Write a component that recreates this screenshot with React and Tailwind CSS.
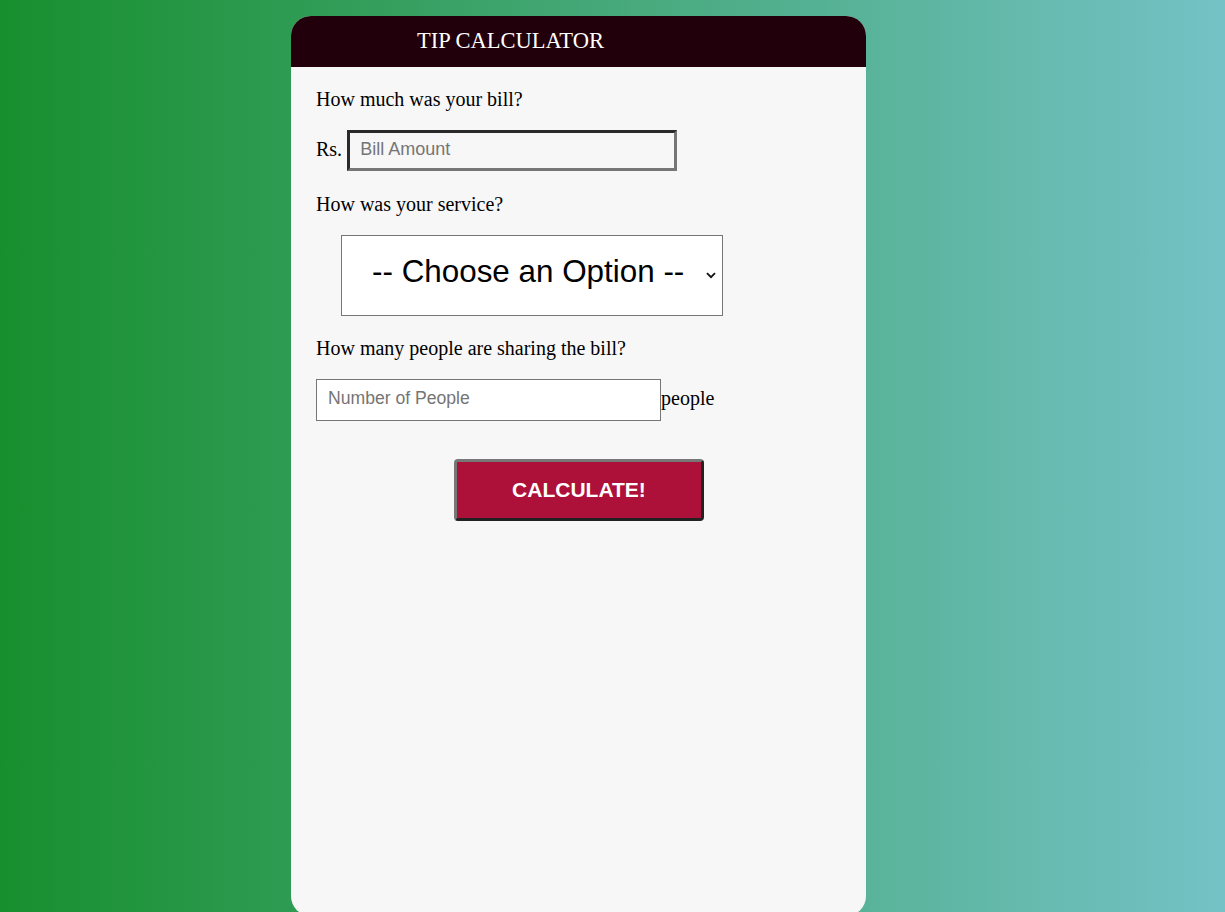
export default function App() {
  return (
    <div className="min-h-[912px] w-full overflow-hidden bg-[linear-gradient(to_right,#188f2e,#74c2c6)] pt-[16px] font-['Liberation_Serif',serif]">
      <div className="ml-[291px] flex h-[900px] w-[575px] flex-col overflow-hidden rounded-[20px] bg-[#f7f7f7]">
        {/* Header */}
        <div className="flex h-[51px] items-center bg-[#22000b] pl-[126px]">
          <h1 className="text-[22.5px] leading-none text-white">TIP CALCULATOR</h1>
        </div>

        <div className="flex flex-col pl-[25px] text-[20px] text-black">
          <p className="mt-[21px] leading-[22px]">How much was your bill?</p>

          <div className="mt-[20px] flex items-center">
            <span className="mr-[5px] mb-[3px]">Rs.</span>
            <input
              type="text"
              placeholder="Bill Amount"
              className="h-[41px] w-[330px] border-[3px] border-t-[#2a2a2a] border-l-[#2a2a2a] border-r-[#767676] border-b-[#767676] bg-transparent px-[10px] pb-[2px] font-['Liberation_Sans',Arial,sans-serif] text-[18px] placeholder:text-[#757575] outline-none"
            />
          </div>

          <p className="mt-[22px] leading-[22px]">How was your service?</p>

          <div className="relative mt-[20px] ml-[25px] w-[382px]">
            <select
              defaultValue=""
              className="h-[81px] w-full appearance-none border border-[#767676] bg-white pb-[8px] pl-[30px] pr-[24px] font-['Liberation_Sans',Arial,sans-serif] text-[31.4px] text-black outline-none"
            >
              <option value="" disabled>-- Choose an Option --</option>
              <option value="0.3">30% - Outstanding</option>
              <option value="0.2">20% - Good</option>
              <option value="0.15">15% - It was OK</option>
              <option value="0.1">10% - Bad</option>
              <option value="0.05">5% - Terrible</option>
            </select>
            {/* chevron */}
            <svg
              className="pointer-events-none absolute left-[365px] top-[37px]"
              width="10"
              height="7"
              viewBox="0 0 10 7"
              fill="none"
            >
              <path d="M1 1.2L5 5.2L9 1.2" stroke="#111" strokeWidth="1.8" />
            </svg>
          </div>

          <p className="mt-[21px] leading-[22px]">How many people are sharing the bill?</p>

          <div className="mt-[20px] flex items-center">
            <input
              type="text"
              placeholder="Number of People"
              className="h-[42px] w-[345px] border border-[#767676] bg-white px-[11px] pb-[3px] font-['Liberation_Sans',Arial,sans-serif] text-[17.6px] placeholder:text-[#757575] outline-none"
            />
            <span className="mb-[4px]">people</span>
          </div>

          <button
            type="button"
            className="mt-[38px] ml-[138px] h-[62px] w-[250px] rounded-[4px] border-[3px] border-t-[#777] border-l-[#777] border-r-[#222] border-b-[#222] bg-[#ad1038] font-['Liberation_Sans',Arial,sans-serif] text-[21px] font-bold text-white"
          >
            CALCULATE!
          </button>
        </div>
      </div>
    </div>
  );
}
